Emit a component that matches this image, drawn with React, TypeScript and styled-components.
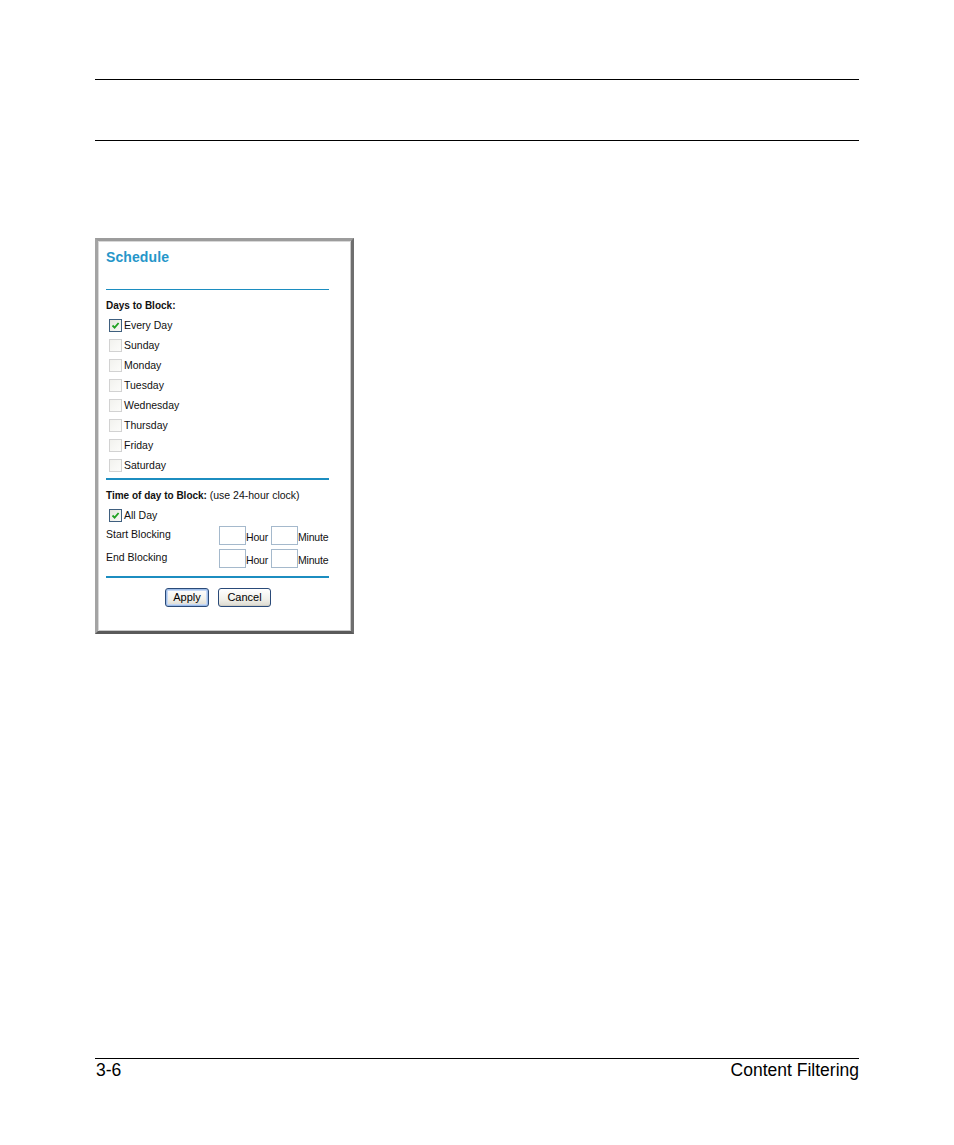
import React from "react";
import styled, { createGlobalStyle } from "styled-components";

const Global = createGlobalStyle`
  html, body { margin: 0; padding: 0; background: #fff; }
  body { font-family: "Liberation Sans", Arial, sans-serif; color: #000; }
`;

const Page = styled.div`
  width: 954px;
  height: 1145px;
  box-sizing: border-box;
  padding: 79px 95px 0 95px;
  display: flex;
  flex-direction: column;
`;

const Rule = styled.div<{ $gap?: number }>`
  height: 1px;
  background: #000;
  margin-top: ${(p) => p.$gap ?? 0}px;
`;

const Panel = styled.div`
  margin-top: 97px;
  width: 259px;
  height: 396px;
  box-sizing: border-box;
  border-style: solid;
  border-width: 3px;
  border-color: #9c9c9c #6e6e6e #5a5a5a #a4a4a4;
  background: #fff;
  box-shadow: inset 1px 1px 0 #d8d8d8, inset -1px -1px 0 #c8c8c8;
  padding: 8px 22px 0 8px;
  display: flex;
  flex-direction: column;
  font-family: "Liberation Sans", Arial, sans-serif;
  font-size: 10.5px;
  color: #111;
`;

const Title = styled.div`
  font-size: 14px;
  font-weight: bold;
  line-height: 16px;
  color: #2596c9;
  letter-spacing: 0.1px;
`;

const Divider = styled.div<{ $top: number; $thick?: number }>`
  margin-top: ${(p) => p.$top}px;
  height: ${(p) => p.$thick ?? 1}px;
  background: #1c8dc0;
  flex: none;
`;

const Heading = styled.div<{ $top: number }>`
  margin-top: ${(p) => p.$top}px;
  line-height: 14px;
  font-size: 10px;
  white-space: nowrap;
  b { font-weight: bold; }
`;

const HeadNote = styled.span`
  font-size: 10.5px;
`;

const CheckList = styled.div<{ $top: number }>`
  margin-top: ${(p) => p.$top}px;
  display: flex;
  flex-direction: column;
`;

const CheckRow = styled.label`
  height: 20px;
  display: flex;
  align-items: center;
  padding-left: 3px;
  gap: 2px;
  white-space: nowrap;
`;

const Box = styled.span<{ $checked?: boolean }>`
  width: 11px;
  height: 11px;
  border: 1px solid ${(p) => (p.$checked ? "#3f5f7f" : "#d2d2d2")};
  background: ${(p) =>
    p.$checked ? "linear-gradient(135deg,#e4e4dc,#fbfbf8)" : "linear-gradient(135deg,#f2f2ee,#fcfcfa)"};
  display: inline-flex;
  align-items: center;
  justify-content: center;
  flex: none;
`;

const Check = () => (
  <svg width="9" height="9" viewBox="0 0 9 9">
    <path d="M1.5 4.5 L3.6 6.6 L7.6 2" fill="none" stroke="#21a121" strokeWidth="1.8" />
  </svg>
);

const TimeGrid = styled.div`
  margin-top: 0;
  display: grid;
  grid-template-columns: 113px auto;
  row-gap: 3px;
`;

const TimeLabel = styled.div`
  height: 20px;
  display: flex;
  align-items: center;
  margin-top: -1px;
  white-space: nowrap;
`;

const Fields = styled.div`
  display: flex;
  align-items: flex-end;
  height: 20px;
`;

const Field = styled.input`
  width: 27px;
  height: 19px;
  box-sizing: border-box;
  border: 1px solid #a5b9cc;
  background: #fff;
  padding: 0;
  margin: 0;
  font: inherit;
`;

const Unit = styled.span<{ $w: number }>`
  width: ${(p) => p.$w}px;
  line-height: 12px;
  padding-bottom: 2px;
  white-space: nowrap;
  letter-spacing: -0.2px;
`;

const Buttons = styled.div`
  margin-top: 10px;
  display: flex;
  justify-content: center;
  gap: 9px;
  padding-left: 1px;
`;

const Btn = styled.button<{ $w: number; $focus?: boolean }>`
  width: ${(p) => p.$w}px;
  height: 19px;
  box-sizing: border-box;
  padding: 0;
  border: 1px solid #2a4a78;
  border-radius: 3px;
  background: linear-gradient(#ffffff, #f1f0ea 60%, #dcdad0);
  box-shadow: ${(p) => (p.$focus ? "inset 0 0 0 1px #9dbce8, inset 0 0 0 2px #c6d8f4" : "inset 0 -1px 0 #d0cec4")};
  font-family: "Liberation Sans", Arial, sans-serif;
  font-size: 11px;
  color: #000;
  line-height: 17px;
`;

const Footer = styled.div`
  margin-top: auto;
  margin-bottom: 64px;
  display: flex;
  flex-direction: column;
`;

const FooterText = styled.div`
  margin-top: 0px;
  display: flex;
  justify-content: space-between;
  font-size: 17.5px;
  line-height: 22px;
  padding-left: 1px;
`;

const days = ["Every Day", "Sunday", "Monday", "Tuesday", "Wednesday", "Thursday", "Friday", "Saturday"];

export default function App() {
  return (
    <>
      <Global />
      <Page>
        <Rule />
        <Rule $gap={60} />
        <Panel>
          <Title>Schedule</Title>
          <Divider $top={24} />
          <Heading $top={9}>
            <b>Days to Block:</b>
          </Heading>
          <CheckList $top={2}>
            {days.map((d, i) => (
              <CheckRow key={d}>
                <Box $checked={i === 0}>{i === 0 && <Check />}</Box>
                {d}
              </CheckRow>
            ))}
          </CheckList>
          <Divider $top={3} $thick={2} />
          <Heading $top={8}>
            <b>Time of day to Block:</b> <HeadNote>(use 24-hour clock)</HeadNote>
          </Heading>
          <CheckList $top={2}>
            <CheckRow>
              <Box $checked>
                <Check />
              </Box>
              All Day
            </CheckRow>
          </CheckList>
          <TimeGrid>
            <TimeLabel>Start Blocking</TimeLabel>
            <Fields>
              <Field />
              <Unit $w={25}>Hour</Unit>
              <Field />
              <Unit $w={31}>Minute</Unit>
            </Fields>
            <TimeLabel>End Blocking</TimeLabel>
            <Fields>
              <Field />
              <Unit $w={25}>Hour</Unit>
              <Field />
              <Unit $w={31}>Minute</Unit>
            </Fields>
          </TimeGrid>
          <Divider $top={8} $thick={2} />
          <Buttons>
            <Btn $w={44} $focus>Apply</Btn>
            <Btn $w={53}>Cancel</Btn>
          </Buttons>
        </Panel>
        <Footer>
          <Rule />
          <FooterText>
            <span>3-6</span>
            <span>Content Filtering</span>
          </FooterText>
        </Footer>
      </Page>
    </>
  );
}
